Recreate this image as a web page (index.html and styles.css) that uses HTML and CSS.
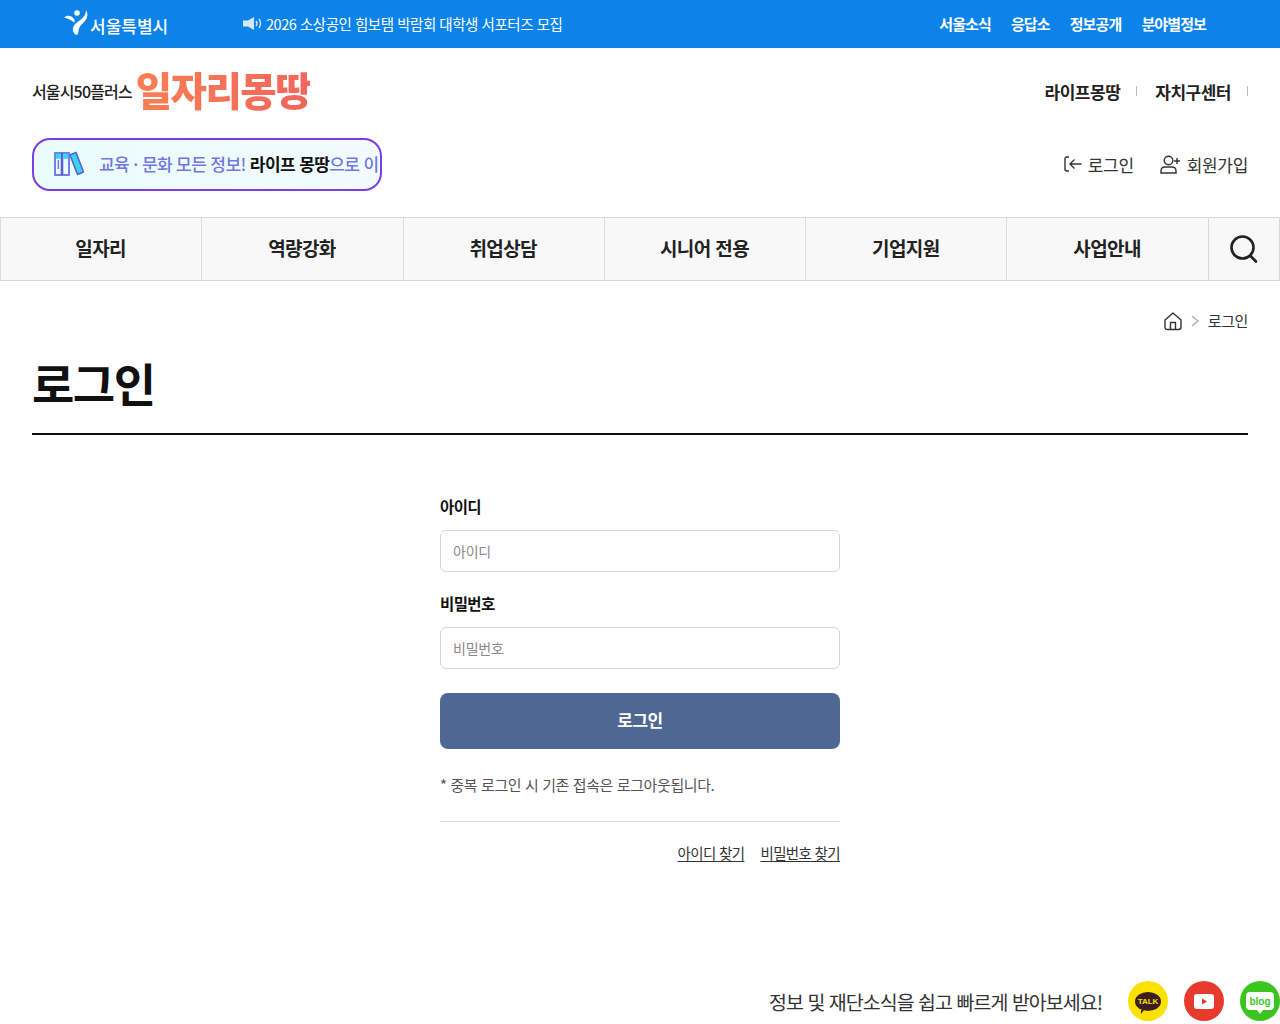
FILE: index.html
```html
<!DOCTYPE html>
<html lang="ko">
<head>
<meta charset="utf-8">
<title>로그인</title>
<link rel="stylesheet" href="styles.css">
</head>
<body>
<div class="topbar">
  <a class="seoul">
    <svg class="seoul-mark" width="26" height="26" viewBox="0 0 26 26" fill="#fff"><circle cx="13" cy="3" r="2.800"/><path d="M0 7.500C3 5 7 5 10 9C11 10.500 11 11.500 10 12.500C7 9.500 3 8.500 0 7.500Z"/><path d="M22 0C25.500 6 22 11 17 15C14.500 18 14.500 21 14 24C12 26 10 24 9 21C8 16 12 13 15 11C19 8 22 5 22 0Z"/></svg>
    <span class="seoul-name">서울특별시</span>
  </a>
  <div class="notice">
    <svg width="20" height="13" viewBox="0 0 20 13"><path d="M0 3.500H5L11 0V13L5 9.500H0Z" fill="#d5e8fa"/><path d="M13 4Q15 6.500 13 9M16 2Q19 6.500 16 11" fill="none" stroke="#d5e8fa" stroke-width="1.400"/></svg>
    <span>2026 소상공인 힘보탬 박람회 대학생 서포터즈 모집</span>
  </div>
  <nav class="toplinks"><a>서울소식</a><a>응답소</a><a>정보공개</a><a>분야별정보</a></nav>
</div>

<header class="header">
  <div class="header-row">
    <a class="brand"><span class="brand-sub">서울시50플러스</span><span class="brand-main">일자리몽땅</span></a>
    <nav class="sites"><a>라이프몽땅</a><a>자치구센터</a></nav>
  </div>
  <div class="header-row second">
    <div class="banner">
      <svg width="30" height="26" viewBox="0 0 30 26"><rect x="1" y="2" width="6.500" height="22" fill="#eafcff" stroke="#5a5fe0" stroke-width="1.600"/><rect x="1.800" y="2.800" width="5" height="5" fill="#38d6ee"/><rect x="3.700" y="9" width="1.200" height="9" fill="#5a5fe0"/><rect x="8.500" y="2" width="6.500" height="22" fill="#eafcff" stroke="#5a5fe0" stroke-width="1.600"/><rect x="9.300" y="2.800" width="5" height="5" fill="#38d6ee"/><path d="M16 4 L22 1.500 L29.500 21 L23.500 23.500Z" fill="#38d6ee" stroke="#5a5fe0" stroke-width="1.600" stroke-linejoin="round"/></svg>
      <p class="banner-text">교육 · 문화 모든 정보! <b>라이프 몽땅</b>으로 이</p>
    </div>
    <div class="auth">
      <a>
        <svg width="18" height="16" viewBox="0 0 18 16" fill="none" stroke="#333" stroke-width="1.400"><path d="M5 1H3Q1 1 1 3V13Q1 15 3 15H5"/><path d="M17.500 8H6M10.500 3.500L6 8L10.500 12.500"/></svg>
        로그인
      </a>
      <a>
        <svg width="21" height="19" viewBox="0 0 21 19" fill="none" stroke="#333" stroke-width="1.400"><circle cx="8.500" cy="5.500" r="4.300"/><path d="M1 18V16Q1 12 5 12H12Q16 12 16 16V18Z"/><path d="M17 3V9M14 6H20"/></svg>
        회원가입
      </a>
    </div>
  </div>
</header>

<nav class="gnb">
  <a>일자리</a><a>역량강화</a><a>취업상담</a><a>시니어 전용</a><a>기업지원</a><a>사업안내</a>
  <button class="gnb-search" aria-label="검색">
    <svg width="30" height="30" viewBox="0 0 30 30" fill="none" stroke="#222" stroke-width="2.600" stroke-linecap="round"><circle cx="13.500" cy="13.500" r="11"/><path d="M21.500 22L27 27.500"/></svg>
  </button>
</nav>

<main class="page">
  <div class="crumb">
    <svg width="20" height="20" viewBox="0 0 20 20" fill="none" stroke="#333" stroke-width="1.400" stroke-linejoin="round"><path d="M2 9L10 2L18 9V16Q18 18.500 15.500 18.500H4.500Q2 18.500 2 16Z"/><path d="M7.500 18.500V11.500H12.500V18.500"/></svg>
    <svg width="8" height="12" viewBox="0 0 8 12" fill="none" stroke="#aaa" stroke-width="1.200"><path d="M1 1L7 6L1 11"/></svg>
    <span class="crumb-text">로그인</span>
  </div>
  <h1 class="title">로그인</h1>

  <form class="login">
    <label class="label">아이디</label>
    <input class="field" type="text" placeholder="아이디">
    <label class="label">비밀번호</label>
    <input class="field" type="password" placeholder="비밀번호">
    <button class="submit" type="button">로그인</button>
    <p class="note">* 중복 로그인 시 기존 접속은 로그아웃됩니다.</p>
    <div class="find"><a>아이디 찾기</a><a>비밀번호 찾기</a></div>
  </form>

  <div class="social">
    <span class="social-text">정보 및 재단소식을 쉽고 빠르게 받아보세요!</span>
    <a class="sns kakao"><span class="talk">TALK</span></a>
    <a class="sns youtube"><svg width="20" height="15" viewBox="0 0 20 15"><rect width="20" height="15" rx="3" fill="#fff"/><path d="M8 4.500L13 7.500L8 10.500Z" fill="#e83a2a"/></svg></a>
    <a class="sns blog"><span class="blogtag">blog</span></a>
  </div>
</main>
</body>
</html>
```
FILE: styles.css
```css
* { box-sizing: border-box; }
html, body { margin: 0; padding: 0; }
body {
  font-family: "Noto Sans CJK KR", "Noto Sans", sans-serif;
  color: #222;
  background: #fff;
  overflow-x: hidden;
}
a { color: inherit; text-decoration: none; }

.topbar {
  height: 48px;
  background: #0b83e9;
  color: #fff;
  display: flex;
  align-items: center;
  padding-left: 64px;
  padding-right: 74px;
}
.seoul { display: flex; align-items: flex-start; width: 179px; height: 48px; padding-top: 10px; }
.seoul-name { font-size: 17px; font-weight: 500; line-height: 32px; letter-spacing: 0; }
.notice { display: flex; align-items: center; gap: 3px; padding-bottom: 2px; font-size: 14.500px; letter-spacing: -0.470px; color: #fff; }
.toplinks { margin-left: auto; display: flex; gap: 20px; padding-bottom: 2px; font-size: 15px; font-weight: 700; letter-spacing: -0.880px; }

.header { padding: 0 32px; }
.header-row { display: flex; justify-content: space-between; align-items: center; height: 86px; }
.header-row.second { height: 60px; margin-bottom: 23px; }
.brand { display: flex; align-items: center; margin-bottom: 4px; }
.brand-sub { padding-top: 4px; font-size: 16px; font-weight: 500; letter-spacing: -0.850px; margin-right: 4px; color: #222; }
.brand-main {
  font-size: 39.500px;
  font-weight: 900;
  line-height: 50px;
  letter-spacing: -1.500px;
  background: linear-gradient(90deg, #f87f52, #f4655c);
  background-clip: text;
  -webkit-background-clip: text;
  color: transparent;
}
.sites { display: flex; font-size: 17px; font-weight: 700; letter-spacing: -0.500px; color: #222; }
.sites a { display: flex; align-items: center; }
.sites a + a { margin-left: 18px; }
.sites a::after { content: ""; width: 1px; height: 10px; background: #bbb; margin-left: 16px; }

.banner {
  width: 350px;
  height: 53px;
  border: 2px solid #7a3ee2;
  border-radius: 18px;
  background: linear-gradient(90deg, #eafcfc, #f2fbff);
  display: flex;
  align-items: center;
  padding-left: 20px;
  overflow: hidden;
}
.banner svg { flex: none; margin-right: 15px; }
.banner-text { margin: 0; padding-bottom: 2px; white-space: nowrap; font-size: 17px; font-weight: 500; letter-spacing: -0.600px; color: #6f78e0; }
.banner-text b { color: #111; font-weight: 700; }
.auth { display: flex; gap: 26px; font-size: 17px; letter-spacing: -0.320px; color: #333; }
.auth a { display: flex; align-items: center; gap: 6px; }

.gnb {
  height: 64px;
  display: flex;
  background: #f8f8f8;
  border-top: 1px solid #d8d8d8;
  border-bottom: 1px solid #d8d8d8;
}
.gnb a {
  width: 201.300px;
  flex: none;
  display: flex;
  align-items: center;
  justify-content: center;
  padding: 0 1px 4px 0;
  font-size: 19px;
  font-weight: 700;
  letter-spacing: -0.600px;
  border-left: 1px solid #dcdcdc;
}
.gnb-search {
  flex: 1;
  border: 0;
  border-left: 1px solid #d8d8d8;
  border-right: 1px solid #d8d8d8;
  background: #f8f8f8;
  display: flex;
  align-items: center;
  justify-content: center;
  padding: 0;
}

.page { padding: 0 32px; }
.crumb { display: flex; justify-content: flex-end; align-items: center; gap: 8px; height: 24px; margin-top: 28px; }
.crumb-text { padding-bottom: 2px; margin-left: 1px; font-size: 15px; letter-spacing: -0.400px; color: #333; }
.title {
  margin: 0;
  padding-top: 20px;
  height: 102px;
  border-bottom: 2px solid #111;
  font-size: 46px;
  line-height: 58px;
  font-weight: 700;
  letter-spacing: -1.500px;
  color: #111;
}

.login { width: 400px; margin: 59px auto 0; display: flex; flex-direction: column; }
.label { font-size: 15.500px; line-height: 24px; font-weight: 700; letter-spacing: -0.600px; color: #111; margin-bottom: 12px; }
.field {
  height: 42px;
  border: 1px solid #d5d5d5;
  border-radius: 6px;
  padding: 0 12px 1px;
  margin-bottom: 19px;
  font: 400 14px "Noto Sans CJK KR", sans-serif;
  letter-spacing: -0.250px;
  background: #fff;
}
.field::placeholder { color: #8a8a8a; opacity: 1; }
.submit {
  height: 56px;
  margin-top: 5px;
  padding: 0 0 3px;
  border: 0;
  border-radius: 8px;
  background: #4f6893;
  color: #fff;
  font: 700 17px "Noto Sans CJK KR", sans-serif;
  letter-spacing: -0.500px;
}
.note {
  margin: 24px 0 0;
  padding-bottom: 24px;
  font-size: 15px;
  line-height: 24px;
  letter-spacing: -0.400px;
  color: #555;
  border-bottom: 1px solid #d8d8d8;
}
.find { display: flex; justify-content: flex-end; gap: 16px; margin-top: 19px; font-size: 14.500px; line-height: 24px; letter-spacing: -0.650px; color: #333; }
.find a { text-decoration: underline; text-underline-offset: 2px; }

.social { display: flex; align-items: center; justify-content: flex-end; margin: 116px -32px 0 0; }
.social-text { font-size: 19.500px; letter-spacing: -0.980px; color: #333; margin-right: 26px; }
.sns { width: 40px; height: 40px; border-radius: 50%; flex: none; display: flex; align-items: center; justify-content: center; }
.sns + .sns { margin-left: 16px; }
.kakao { background: #fae100; }
.youtube { background: #e83a2a; }
.blog { background: #3cc51f; }
.talk {
  background: #3c1e1e;
  color: #fae100;
  font: 700 8px "Liberation Sans", sans-serif;
  width: 26px;
  height: 19px;
  border-radius: 50%;
  display: flex;
  align-items: center;
  justify-content: center;
  position: relative;
}
.talk::after { content: ""; position: absolute; left: 6px; bottom: -3px; border-left: 3px solid #3c1e1e; border-right: 2px solid transparent; border-bottom: 4px solid transparent; border-top: 0; }
.blogtag {
  background: #fff;
  color: #3cc51f;
  font: 700 10px "Liberation Sans", sans-serif;
  width: 28px;
  height: 18px;
  border-radius: 4px;
  display: flex;
  align-items: center;
  justify-content: center;
  position: relative;
}
.blogtag::after { content: ""; position: absolute; left: 11px; bottom: -4px; border-left: 3px solid transparent; border-right: 3px solid transparent; border-top: 4px solid #fff; }
```
